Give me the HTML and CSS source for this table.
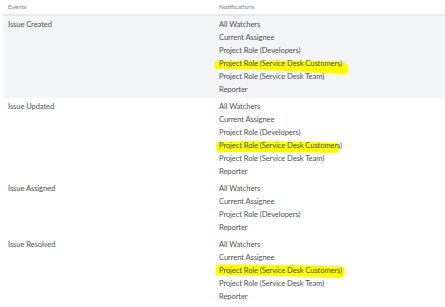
FILE: index.html
```html
<!DOCTYPE html>
<html>
<head>
<meta charset="utf-8">
<link rel="stylesheet" href="styles.css">
</head>
<body>
<div class="table">
  <div class="row head">
    <div class="c1">Events</div>
    <div class="c2">Notifications</div>
  </div>
  <div class="row alt">
    <div class="c1">Issue Created</div>
    <div class="c2">
      <div class="ln">All Watchers</div>
      <div class="ln">Current Assignee</div>
      <div class="ln">Project Role (Developers)</div>
      <div class="ln"><span class="hl"><svg class="mark" viewBox="0 0 140 22"><path d="M3 6 C40 5.5 100 5.5 126 6.5 C132 7 135 9 135.5 12.5 C136 16 134.5 19.5 131 19.5 C115 18 60 14.5 3 14 C0.5 13.5 0.5 6.5 3 6 Z" fill="#ffff00"/></svg><span class="tx">Project Role (Service Desk Customers)</span></span></div>
      <div class="ln">Project Role (Service Desk Team)</div>
      <div class="ln">Reporter</div>
    </div>
  </div>
  <div class="row">
    <div class="c1">Issue Updated</div>
    <div class="c2">
      <div class="ln">All Watchers</div>
      <div class="ln">Current Assignee</div>
      <div class="ln">Project Role (Developers)</div>
      <div class="ln"><span class="hl"><svg class="mark" viewBox="0 0 140 22"><path d="M5 4.5 C40 4 90 4 122 5.5 C126 6 127 9 126.5 12 C126 15 124 16 121 16 C90 15.5 40 15 5 15 C2.5 14.5 2.5 5 5 4.5 Z" fill="#ffff00"/></svg><span class="tx">Project Role (Service Desk Customers)</span></span></div>
      <div class="ln">Project Role (Service Desk Team)</div>
      <div class="ln">Reporter</div>
    </div>
  </div>
  <div class="row">
    <div class="c1">Issue Assigned</div>
    <div class="c2">
      <div class="ln">All Watchers</div>
      <div class="ln">Current Assignee</div>
      <div class="ln">Project Role (Developers)</div>
      <div class="ln">Reporter</div>
    </div>
  </div>
  <div class="row">
    <div class="c1">Issue Resolved</div>
    <div class="c2">
      <div class="ln">All Watchers</div>
      <div class="ln">Current Assignee</div>
      <div class="ln"><span class="hl"><svg class="mark" viewBox="0 0 140 22"><path d="M4.5 2.5 C40 2.5 100 3 127 4.5 C131 5 132.5 8 132 11 C131.5 14 129.5 16 126 16 C90 14.5 40 13.5 4.5 13.5 C2 13 2 3 4.5 2.5 Z" fill="#ffff00"/></svg><span class="tx">Project Role (Service Desk Customers)</span></span></div>
      <div class="ln">Project Role (Service Desk Team)</div>
      <div class="ln">Reporter</div>
    </div>
  </div>
</div>
</body>
</html>
```

FILE: styles.css
```css
html, body {
  margin: 0;
  padding: 0;
  background: #ffffff;
}
body {
  font-family: "Lato", "Open Sans", sans-serif;
  color: #505358;
  font-size: 7.6px;
  letter-spacing: -0.1px;
}
.table {
  margin-left: 3px;
}
.row {
  display: grid;
  grid-template-columns: 216px 1fr;
  padding: 2px 0;
  line-height: 13px;
}
.row.head {
  padding: 1px 0 1px;
  font-size: 6.3px;
  letter-spacing: 0;
  color: #7a7f88;
  border-bottom: 2px solid #e6e8ec;
  line-height: 12px;
}
.row.alt {
  background: #f4f5f7;
}
.c1 {
  padding-left: 5px;
}
.ln {
  white-space: nowrap;
}
.hl {
  position: relative;
  display: inline-block;
}
.mark {
  position: absolute;
  left: -6px;
  top: -2px;
  width: 140px;
  height: 22px;
}
.tx {
  position: relative;
}
```
